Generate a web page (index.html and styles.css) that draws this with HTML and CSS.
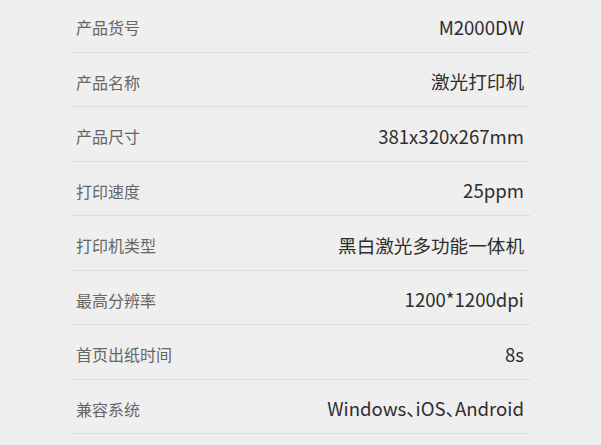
FILE: index.html
```html
<!DOCTYPE html>
<html lang="zh-CN">
<head>
    <meta charset="UTF-8">
    <meta name="viewport" content="width=device-width, initial-scale=1.0">
    <title>产品参数</title>
    <link rel="stylesheet" href="styles.css">
</head>
<body>
    <div class="spec-list">
        <div class="spec-row">
            <span class="spec-label">产品货号</span>
            <span class="spec-value">M2000DW</span>
        </div>
        <div class="spec-row">
            <span class="spec-label">产品名称</span>
            <span class="spec-value">激光打印机</span>
        </div>
        <div class="spec-row">
            <span class="spec-label">产品尺寸</span>
            <span class="spec-value">381x320x267mm</span>
        </div>
        <div class="spec-row">
            <span class="spec-label">打印速度</span>
            <span class="spec-value">25ppm</span>
        </div>
        <div class="spec-row">
            <span class="spec-label">打印机类型</span>
            <span class="spec-value">黑白激光多功能一体机</span>
        </div>
        <div class="spec-row">
            <span class="spec-label">最高分辨率</span>
            <span class="spec-value">1200*1200dpi</span>
        </div>
        <div class="spec-row">
            <span class="spec-label">首页出纸时间</span>
            <span class="spec-value">8s</span>
        </div>
        <div class="spec-row">
            <span class="spec-label">兼容系统</span>
            <span class="spec-value">Windows、iOS、Android</span>
        </div>
    </div>
</body>
</html>
```

FILE: styles.css
```css
body {
    margin: 0;
    padding: 0;
    background-color: #efefef;
    font-family: "Noto Sans CJK SC", "Noto Sans", sans-serif;
}
.spec-list {
    width: 459px;
    margin: -2px auto 0;
}
.spec-row {
    display: flex;
    align-items: center;
    justify-content: space-between;
    height: 53.5px;
    box-sizing: content-box;
    padding: 0 6px 0 5px;
    border-bottom: 1px solid #dcdcdc;
}
.spec-label {
    color: #666;
    font-size: 16px;
    padding-top: 5px;
}
.spec-value {
    color: #2e2e2e;
    font-size: 18.6px;
    font-feature-settings: "palt";
    padding-top: 3px;
}
```
